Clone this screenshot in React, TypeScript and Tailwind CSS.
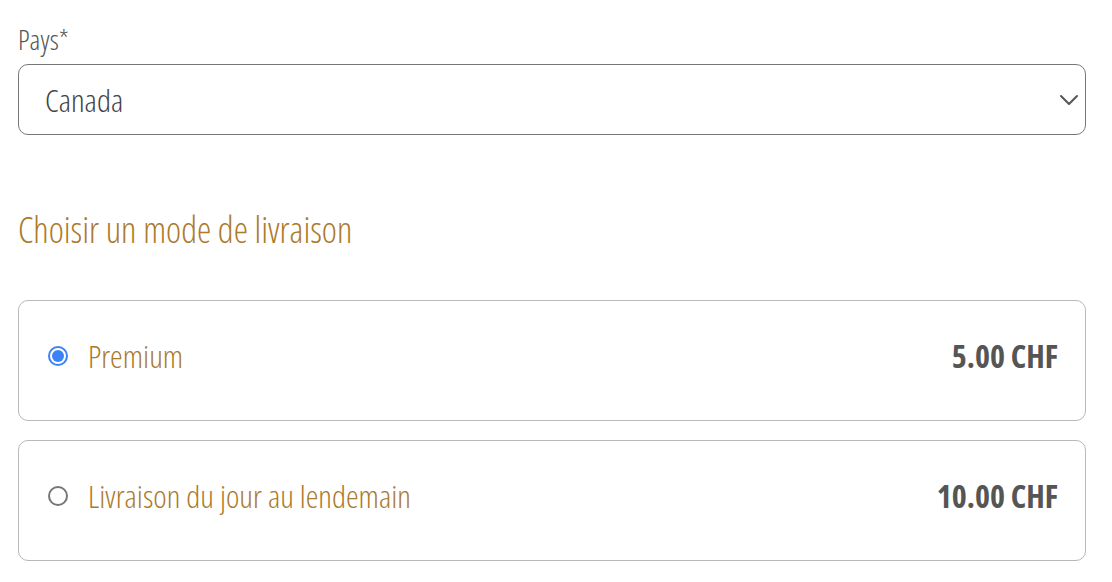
import React from "react";

const font = { fontFamily: '"Open Sans", "Liberation Sans", sans-serif' };

function Radio({ checked }: { checked: boolean }) {
  return checked ? (
    <span className="flex h-[20px] w-[20px] shrink-0 items-center justify-center rounded-full border-[2px] border-[#3b82f6] bg-white">
      <span className="h-[12px] w-[12px] rounded-full bg-[#3b82f6]" />
    </span>
  ) : (
    <span className="h-[20px] w-[20px] shrink-0 rounded-full border-[2px] border-[#767676] bg-white" />
  );
}

function Option({ label, price, checked }: { label: string; price: string; checked: boolean }) {
  return (
    <div className="flex h-[121px] items-center rounded-[10px] border border-[#b8b8b8] bg-white pb-[10px] pl-[29px] pr-[27px]">
      <Radio checked={checked} />
      <span className="ml-[20px] text-[32px] font-light leading-none text-[#ab7a2c] [font-stretch:75%]">{label}</span>
      <span className="ml-auto text-[32px] font-bold leading-none text-[#555555] [font-stretch:75%]">{price}</span>
    </div>
  );
}

export default function App() {
  return (
    <div className="min-h-[582px] w-[1112px] bg-white pl-[18px] pr-[26px] pt-[18px]" style={font}>
      <div className="h-[42px] text-[28px] font-light leading-[42px] text-[#555555] [font-stretch:75%]">Pays*</div>
      <div className="mt-[4px] flex h-[71px] items-center rounded-[10px] border border-[#777777] bg-white pl-[26px] pr-[6px]">
        <span className="text-[32px] font-light leading-none text-[#444444] [font-stretch:75%]">Canada</span>
        <svg className="ml-auto mr-[0px]" width="20" height="12" viewBox="0 0 20 12" fill="none">
          <path d="M2 2 L10 10 L18 2" stroke="#555555" strokeWidth="2" strokeLinecap="round" strokeLinejoin="round" />
        </svg>
      </div>
      <div className="mt-[73px] h-[44px] text-[36px] font-light leading-[44px] text-[#ab7a2c] [font-stretch:75%]">
        Choisir un mode de livraison
      </div>
      <div className="mt-[48px] flex flex-col gap-[19px]">
        <Option label="Premium" price="5.00 CHF" checked />
        <Option label="Livraison du jour au lendemain" price="10.00 CHF" checked={false} />
      </div>
    </div>
  );
}
